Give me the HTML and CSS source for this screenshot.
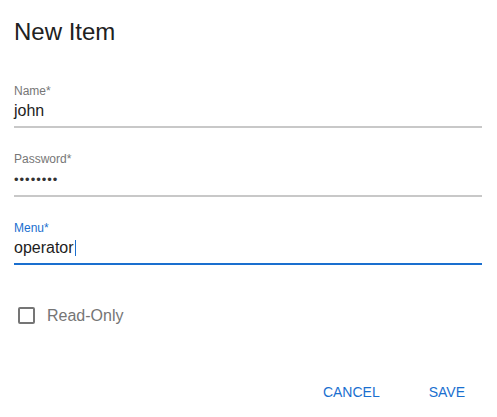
FILE: index.html
```html
<!DOCTYPE html>
<html>
<head>
<meta charset="utf-8">
<link rel="stylesheet" href="styles.css">
</head>
<body>
<div class="dialog">
  <h1 class="title">New Item</h1>
  <div class="field">
    <div class="label">Name*</div>
    <div class="value">john</div>
  </div>
  <div class="field">
    <div class="label">Password*</div>
    <div class="value"><span class="dots">••••••••</span></div>
  </div>
  <div class="field focused">
    <div class="label">Menu*</div>
    <div class="value">operator<span class="caret"></span></div>
  </div>
  <div class="check-row">
    <span class="box"></span>
    <span class="check-label">Read-Only</span>
  </div>
  <div class="actions">
    <span class="btn">CANCEL</span>
    <span class="btn">SAVE</span>
  </div>
</div>
</body>
</html>
```
FILE: styles.css
```css
html, body {
  margin: 0;
  padding: 0;
  background: #ffffff;
}
body {
  font-family: "Liberation Sans", Arial, sans-serif;
}
.dialog {
  padding: 18px 15px 0 14px;
}
.title {
  margin: 0;
  font-size: 24px;
  line-height: 28px;
  font-weight: 400;
  color: #212121;
}
.field {
  margin-top: 24px;
  padding-bottom: 6px;
  border-bottom: 2px solid #c8c8c8;
}
.title + .field {
  margin-top: 38px;
}
.label {
  font-size: 12px;
  line-height: 14px;
  color: #767676;
}
.value {
  padding-top: 3px;
  font-size: 16px;
  line-height: 19px;
  color: #1d1d1d;
}
.dots {
  font-size: 13px;
  letter-spacing: 1px;
  color: #333;
}
.focused {
  border-bottom-color: #1a6fcf;
}
.focused .label {
  color: #1a6fcf;
}
.caret {
  display: inline-block;
  width: 1px;
  height: 16px;
  background: #1a6fcf;
  vertical-align: -3px;
  margin-left: 1px;
}
.check-row {
  margin-top: 41px;
  padding-left: 4px;
  display: flex;
  align-items: center;
}
.box {
  width: 13px;
  height: 13px;
  border: 2px solid #757575;
  border-radius: 2px;
  box-sizing: content-box;
}
.check-label {
  margin-left: 12px;
  font-size: 16px;
  line-height: 19px;
  color: #757575;
}
.actions {
  margin-top: 51px;
  display: flex;
  justify-content: flex-end;
  gap: 15px;
}
.btn {
  padding: 8px 17px;
  font-size: 14px;
  line-height: 16px;
  color: #1a6fcf;
}
```
